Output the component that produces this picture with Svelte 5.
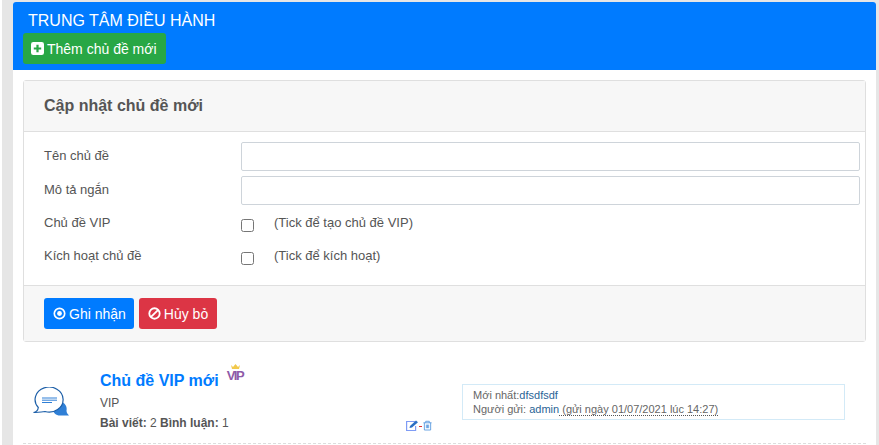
<script>
  const fields = [
    { label: 'Tên chủ đề', kind: 'text' },
    { label: 'Mô tả ngắn', kind: 'text' },
    { label: 'Chủ đề VIP', kind: 'check', hint: '(Tick để tạo chủ đề VIP)' },
    { label: 'Kích hoạt chủ đề', kind: 'check', hint: '(Tick để kích hoạt)' }
  ];
</script>

<div class="page">
  <div class="card">
    <header class="head">
      <div class="title">TRUNG TÂM ĐIỀU HÀNH</div>
      <button class="btn green">
        <svg viewBox="0 0 14 14" width="13" height="13">
          <rect width="14" height="14" rx="2.5" fill="#fff" />
          <path d="M7 3v8M3 7h8" stroke="#28a745" stroke-width="2.4" />
        </svg>
        Thêm chủ đề mới
      </button>
    </header>

    <div class="body">
      <section class="panel">
        <div class="panel-head">Cập nhật chủ đề mới</div>
        <div class="panel-body">
          {#each fields as f}
            <div class="row" class:check={f.kind === 'check'}>
              <span class="label">{f.label}</span>
              {#if f.kind === 'text'}
                <input type="text" />
              {:else}
                <input type="checkbox" />
                <span class="hint">{f.hint}</span>
              {/if}
            </div>
          {/each}
        </div>
        <div class="panel-foot">
          <button class="btn blue">
            <svg viewBox="0 0 14 14" width="13" height="13" fill="none">
              <circle cx="7" cy="7" r="5.6" stroke="#fff" stroke-width="1.8" />
              <circle cx="7" cy="7" r="2.6" fill="#fff" />
            </svg>
            Ghi nhận
          </button>
          <button class="btn red">
            <svg viewBox="0 0 14 14" width="13" height="13" fill="none" stroke="#fff" stroke-width="2">
              <circle cx="7" cy="7" r="5.6" />
              <path d="M3 11l8-8" />
            </svg>
            Hủy bỏ
          </button>
        </div>
      </section>

      <div class="topic">
        <svg class="bubble" viewBox="0 0 36 29" width="36" height="29" fill="none">
          <path d="M27 15C32 15 34.500 20 33.500 23.500C33.500 25.500 34.500 27 36 28.500H27C23 28.500 20 26 20 22z" fill="#2f7fd6" />
          <path d="M.5 25.500C3 25 5 23 5.300 20.500A14 12.500 0 1 1 12 24.500C8 25 4 25.500 .5 25.500z" fill="#fff" stroke="#1d5fa8" stroke-width="1.200" />
          <path d="M9 11h15M9 13.200h15M9 15.500h10" stroke="#2f7fd6" stroke-width="1" />
        </svg>
        <div class="info">
          <div class="name-row">
            <span class="name">Chủ đề VIP mới</span>
            <span class="vip">
              <svg viewBox="0 0 9 5" width="9" height="5"><path d="M0 1l2 2L4.500 0 7 3l2-2-1 4H1z" fill="#f2c94c" /></svg>
              <b>VIP</b>
            </span>
          </div>
          <div class="desc">VIP</div>
          <div class="stats"><b>Bài viết:</b> 2 <b>Bình luận:</b> 1</div>
        </div>
        <div class="actions">
          <svg viewBox="0 0 13 11" width="13" height="11" fill="none">
            <path d="M9 1.500H.6v9h9V6" stroke="#7f9cf5" stroke-width="1.200" />
            <path d="M3.500 8l.5-2L10 .6l2 1.700L6 7.500z" fill="#2b6fc4" />
          </svg>
          <span class="dash"></span>
          <svg viewBox="0 0 10 11" width="9" height="11" fill="none" stroke="#5b9be0">
            <path d="M.5 2.500h9M3 2.500V.8h4v1.700M1.500 2.500v8h7v-8M3.700 4.500v4M5 4.500v4M6.300 4.500v4" />
          </svg>
        </div>
        <div class="latest">
          <div>Mới nhất:<a href="#top">dfsdfsdf</a></div>
          <div>Người gửi: <a href="#top">admin</a><span class="when">&nbsp;(gửi ngày 01/07/2021 lúc 14:27)</span></div>
        </div>
      </div>
    </div>
  </div>
</div>

<style>
  :global(body) {
    background: #fff;
    font-family: "Liberation Sans", Arial, sans-serif;
  }

  .page {
    height: 445px;
    overflow: hidden;
    margin-left: 2px;
    padding: 2px 3px 0 11px;
    background: #e6e6e6;
    box-sizing: border-box;
  }

  .card {
    background: #fff;
    height: 443px;
    overflow: hidden;
    border-radius: 3px 3px 0 0;
  }

  .head {
    height: 68px;
    background: #007bff;
    padding: 9px 10px 0;
    box-sizing: border-box;
  }

  .title {
    color: #fff;
    font-size: 16px;
    line-height: 19px;
    margin-left: 5px;
    margin-bottom: 3px;
  }

  .btn {
    display: inline-flex;
    align-items: center;
    gap: 3px;
    height: 31px;
    padding: 0 9px;
    border: 0;
    border-radius: 3px;
    color: #fff;
    font-size: 14px;
    font-family: inherit;
    white-space: nowrap;
  }

  .green { background: #28a745; padding-left: 8px; }
  .blue { background: #007bff; padding-right: 8px; }
  .red { background: #dc3545; }

  .body {
    padding: 10px 10px 0;
  }

  .panel {
    border: 1px solid #dfdfdf;
    border-radius: 3px;
    height: 262px;
    box-sizing: border-box;
    display: flex;
    flex-direction: column;
  }

  .panel-head {
    height: 50px;
    flex: none;
    background: #f7f7f7;
    border-bottom: 1px solid #dfdfdf;
    padding-left: 20px;
    font-size: 16px;
    font-weight: bold;
    color: #555;
    line-height: 50px;
  }

  .panel-body {
    flex: 1;
    padding: 10px 5px 0 20px;
    display: flex;
    flex-direction: column;
    gap: 5px;
  }

  .row {
    display: flex;
    align-items: flex-start;
    color: #555;
    font-size: 13px;
    height: 29px;
  }

  .row.check {
    height: 28px;
  }

  .label {
    flex: none;
    width: 197px;
    line-height: 27px;
  }

  .row.check .label,
  .hint {
    line-height: 25px;
  }

  .row input[type="text"] {
    flex: 1;
    min-width: 0;
    height: 29px;
    box-sizing: border-box;
    border: 1px solid #ced4da;
    border-radius: 2px;
    background: #fff;
    margin: 0;
  }

  .row input[type="checkbox"] {
    width: 13px;
    height: 13px;
    margin: 9px 20px 0 0;
    flex: none;
  }

  .panel-foot {
    flex: none;
    height: 56px;
    background: #f7f7f7;
    border-top: 1px solid #dfdfdf;
    padding: 12px 20px 0;
    box-sizing: border-box;
    display: flex;
    gap: 5px;
  }

  .topic {
    position: relative;
    height: 101px;
    border-bottom: 1px dashed #ddd;
    display: flex;
    color: #555;
  }

  .bubble {
    flex: none;
    margin: 45px 0 0 10px;
  }

  .info {
    margin: 29px 0 0 31px;
    font-size: 12px;
  }

  .name-row {
    display: flex;
    align-items: flex-start;
    gap: 8px;
  }

  .name {
    font-size: 16px;
    font-weight: bold;
    color: #007bff;
    line-height: 20px;
  }

  .vip {
    display: flex;
    flex-direction: column;
    align-items: center;
    margin-top: -7px;
  }

  .vip svg {
    display: block;
    margin-bottom: 1px;
  }

  .vip b {
    display: block;
    font-size: 13px;
    line-height: 11px;
    color: #8e5aa8;
    letter-spacing: -1.5px;
    padding-right: 1px;
  }

  .desc {
    margin-top: 5px;
    line-height: 14px;
  }

  .stats {
    margin-top: 6px;
    line-height: 14px;
  }

  .actions {
    position: absolute;
    left: 383px;
    top: 78px;
    display: flex;
    align-items: center;
  }

  .dash {
    width: 3px;
    height: 1px;
    margin: 1px 1px 0 0;
    background: #e03131;
  }

  .latest {
    position: absolute;
    left: 439px;
    top: 42px;
    width: 383px;
    height: 36px;
    border: 1px solid #d3eaf7;
    box-sizing: border-box;
    padding: 3px 0 0 10px;
    font-size: 11px;
    line-height: 14px;
    color: #666;
  }

  .latest a {
    color: #2a6496;
    text-decoration: none;
  }

  .when {
    border-bottom: 1px dotted #555;
  }
</style>
